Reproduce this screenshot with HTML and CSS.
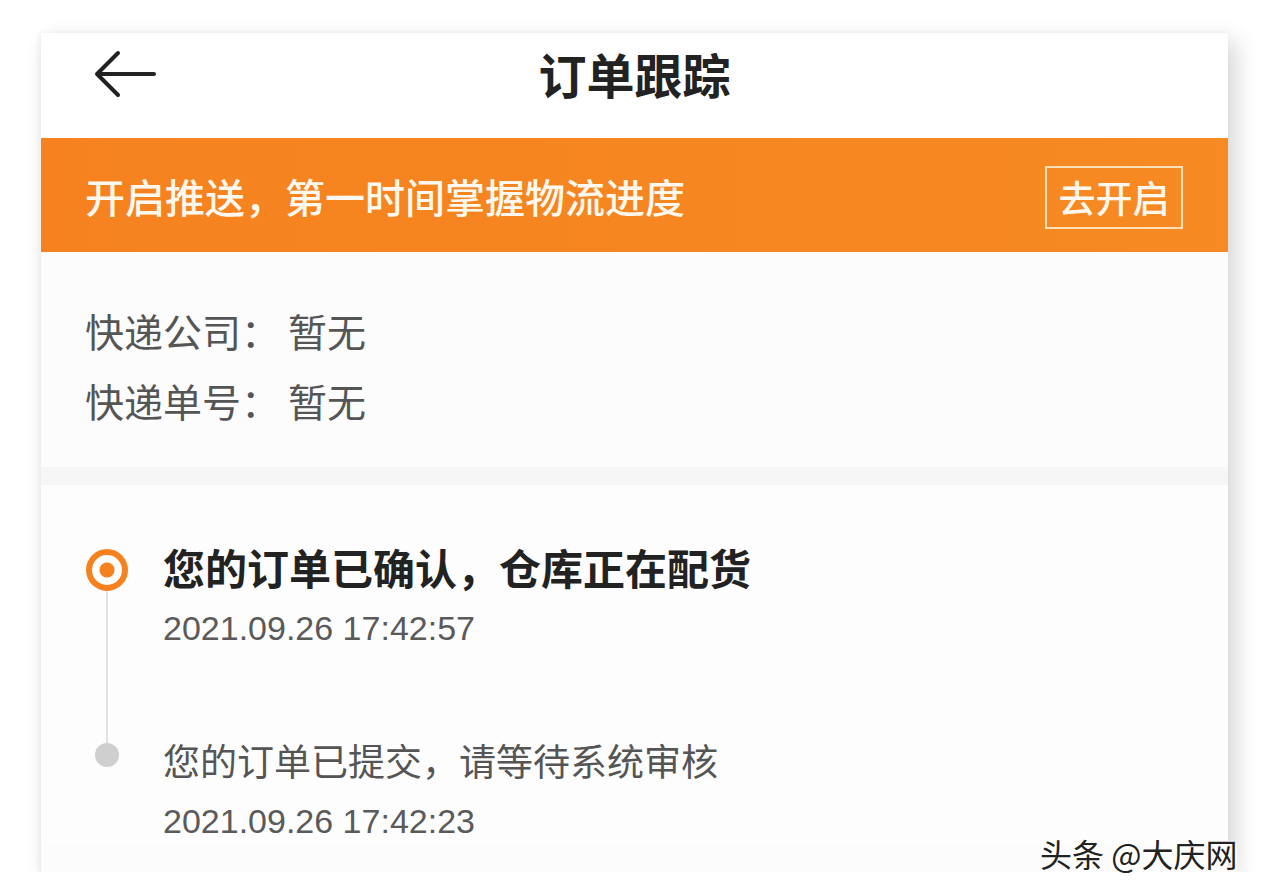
FILE: index.html
```
<!DOCTYPE html>
<html lang="zh-CN">
<head>
  <meta charset="UTF-8" />
  <meta name="viewport" content="width=device-width, initial-scale=1.0"/>
  <title>订单跟踪</title>
  <link rel="stylesheet" href="styles.css">
</head>
<body>
  <div class="phone">
    <div class="topbar">
      <a class="back" href="#">
        <svg width="62" height="48" viewBox="0 0 62 48">
          <path d="M3 24 H60 M24 3 L3 24 L24 45" fill="none" stroke="#222" stroke-width="4" stroke-linecap="round" stroke-linejoin="round"/>
        </svg>
      </a>
      <h1>订单跟踪</h1>
      <span></span>
    </div>

    <div class="push-bar">
      <span>开启推送，第一时间掌握物流进度</span>
      <button>去开启</button>
    </div>

    <div class="info">
      <p>快递公司：<span>暂无</span></p>
      <p>快递单号：<span>暂无</span></p>
    </div>

    <div class="gap"></div>

    <div class="timeline">
      <div class="step current">
        <div class="rail">
          <span class="ring"></span>
          <span class="line"></span>
        </div>
        <div class="text">
          <div class="title">您的订单已确认，仓库正在配货</div>
          <div class="time">2021.09.26 17:42:57</div>
        </div>
      </div>
      <div class="step">
        <div class="rail">
          <span class="line short"></span>
          <span class="dot"></span>
        </div>
        <div class="text">
          <div class="title">您的订单已提交，请等待系统审核</div>
          <div class="time">2021.09.26 17:42:23</div>
        </div>
      </div>
    </div>
  </div>

  <div class="watermark">头条 @大庆网</div>
</body>
</html>
```

FILE: styles.css
```
body {
  font-family: "Liberation Sans", "Noto Sans CJK SC", sans-serif;
  margin: 0;
  padding: 0;
  background: #ffffff;
}
.phone {
  width: 1187px;
  height: 839px;
  margin: 33px 0 0 41px;
  background-color: #fcfcfc;
  box-shadow: 8px 8px 22px rgba(0,0,0,0.16), -2px 0 6px rgba(0,0,0,0.05);
  overflow: hidden;
}
.topbar {
  height: 105px;
  background-color: #fff;
  display: grid;
  grid-template-columns: 1fr auto 1fr;
  align-items: center;
}
.back {
  display: block;
  margin-left: 53px;
  width: 62px;
  height: 48px;
  margin-top: -24px;
}
.topbar h1 {
  margin: 0;
  font-family: "Noto Sans CJK SC", sans-serif;
  font-size: 48px;
  font-weight: 700;
  color: #222;
  margin-top: -26px;
}
.push-bar {
  height: 114px;
  background: linear-gradient(to right, #f5821f, #f78a22);
  display: flex;
  align-items: center;
  justify-content: space-between;
  padding: 0 45px 0 44px;
  color: #fff8ee;
  font-family: "Noto Sans CJK SC", sans-serif;
  font-size: 40px;
  font-weight: 500;
}
.push-bar span {
  margin-top: 2px;
}
.push-bar button {
  width: 138px;
  height: 63px;
  background: transparent;
  border: 2px solid #fde0b8;
  color: #fff8ee;
  font-family: "Noto Sans CJK SC", sans-serif;
  font-size: 37px;
  font-weight: 500;
  padding: 0;
  margin-top: 4px;
}
.info {
  padding: 43px 44px 32px;
  background-color: #fcfcfc;
}
.info p {
  margin: 0;
  height: 70px;
  line-height: 70px;
  font-family: "Noto Sans CJK SC", sans-serif;
  font-size: 39px;
  color: #555;
}
.info p span {
  margin-left: 8px;
}
.gap {
  height: 18px;
  background-color: #f6f6f6;
}
.timeline {
  padding: 54px 0 0 45px;
  background-color: #fdfdfd;
}
.step {
  display: grid;
  grid-template-columns: 42px 1fr;
  column-gap: 35px;
}
.step.current .text {
  padding-bottom: 81px;
}
.rail {
  display: flex;
  flex-direction: column;
  align-items: center;
}
.ring {
  box-sizing: border-box;
  width: 42px;
  height: 42px;
  margin-top: 10px;
  border: 6px solid #f5821f;
  border-radius: 50%;
  background: radial-gradient(circle, #f5821f 0 7px, #fff 8px);
}
.line {
  flex: 1;
  width: 2px;
  background-color: #e2e2e2;
}
.line.short {
  flex: none;
  height: 11px;
}
.dot {
  width: 24px;
  height: 24px;
  border-radius: 50%;
  background-color: #cfcfcf;
}
.title {
  font-family: "Noto Sans CJK SC", sans-serif;
  font-size: 37px;
  line-height: 56px;
  color: #555;
}
.current .title {
  font-size: 42px;
  font-weight: 700;
  color: #222;
}
.time {
  margin-top: 10px;
  font-size: 34px;
  line-height: 46px;
  color: #5a5a5a;
}
.watermark {
  position: absolute;
  left: 1040px;
  top: 830px;
  font-family: "Noto Sans CJK SC", sans-serif;
  font-size: 32px;
  color: #222;
  text-shadow: 2px 2px 0 #fff, -1px -1px 0 #fff;
}
```
